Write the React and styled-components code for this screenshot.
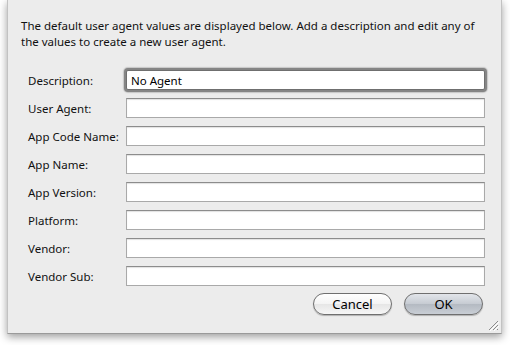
import React from "react";
import styled, { createGlobalStyle } from "styled-components";

const fields = [
	{ label: "Description:", value: "No Agent", focused: true },
	{ label: "User Agent:", value: "" },
	{ label: "App Code Name:", value: "" },
	{ label: "App Name:", value: "" },
	{ label: "App Version:", value: "" },
	{ label: "Platform:", value: "" },
	{ label: "Vendor:", value: "" },
	{ label: "Vendor Sub:", value: "" },
];

const GlobalStyle = createGlobalStyle`
	html, body {
		margin: 0;
		background: #ffffff;
	}
	body {
		font-family: "Noto Sans", "DejaVu Sans", sans-serif;
		color: #000;
	}
`;

const ResizeGrip = () => (
	<Grip width="12" height="12" viewBox="0 0 12 12">
		<path d="M11 2 L2 11 M11 6 L6 11 M11 10 L10 11" stroke="#8a8a8a" strokeWidth="1" fill="none" />
		<path d="M12 3 L3 12 M12 7 L7 12" stroke="#ffffff" strokeWidth="1" fill="none" />
	</Grip>
);

const App = () => {
	return (
		<>
			<GlobalStyle />
			<Stage>
				<Sheet>
					<Intro>
						The default user agent values are displayed below. Add a description and edit any of
						the values to create a new user agent.
					</Intro>
					<Form>
						{fields.map((f) => (
							<React.Fragment key={f.label}>
								<Label>{f.label}</Label>
								<Field $focused={f.focused} defaultValue={f.value} readOnly />
							</React.Fragment>
						))}
					</Form>
					<Buttons>
						<Button>Cancel</Button>
						<Button $primary>OK</Button>
					</Buttons>
					<ResizeGrip />
				</Sheet>
			</Stage>
		</>
	);
};

export default App;

const Stage = styled.div`
	width: 510px;
	height: 345px;
	overflow: hidden;
	padding-left: 7px;
	box-sizing: border-box;
`;

const Sheet = styled.div`
	position: relative;
	width: 495px;
	height: 334px;
	box-sizing: border-box;
	background: #ececec;
	border-left: 1px solid #c2c2c2;
	border-right: 1px solid #c2c2c2;
	border-bottom: 1px solid #9a9a9a;
	box-shadow: 0 3px 8px rgba(0, 0, 0, 0.38);
	padding: 18px 16px 0 13px;
	display: flex;
	flex-direction: column;
`;

const Intro = styled.p`
	margin: 0;
	font-size: 11.5px;
	line-height: 16px;
	width: 470px;
	color: #111;
`;

const Form = styled.div`
	display: grid;
	grid-template-columns: 98px 1fr;
	grid-auto-rows: 20px;
	row-gap: 8px;
	margin-top: 20px;
	padding-left: 7px;
	align-items: center;
`;

const Label = styled.label`
	font-size: 11.5px;
	white-space: nowrap;
	color: #111;
`;

const Field = styled.input`
	height: 20px;
	box-sizing: border-box;
	margin: 0;
	padding: 0 4px;
	font-family: "Noto Sans", "DejaVu Sans", sans-serif;
	font-size: 11.5px;
	color: #000;
	background: #fff;
	border: 1px solid #a9a9a9;
	border-top-color: #8c8c8c;
	box-shadow: inset 0 1px 1px rgba(0, 0, 0, 0.12);
	outline: none;
	${(p) =>
		p.$focused &&
		`
		border-radius: 2px;
		border-color: #6f6f6f;
		box-shadow: 0 0 0 2px rgba(125, 125, 125, 0.9), 0 0 1px 3px rgba(150, 150, 150, 0.45);
	`}
`;

const Buttons = styled.div`
	display: flex;
	justify-content: flex-end;
	gap: 12px;
	margin-top: 7px;
	padding-right: 2px;
`;

const Button = styled.button`
	width: 79px;
	height: 22px;
	box-sizing: border-box;
	border-radius: 11px;
	border: 1px solid #6f6f6f;
	font-family: "Noto Sans", "DejaVu Sans", sans-serif;
	font-size: 13px;
	color: #000;
	padding: 0;
	background: ${(p) =>
		p.$primary
			? "linear-gradient(#e2e5ea 0%, #c7ccd3 48%, #b4bac2 52%, #c9ced5 100%)"
			: "linear-gradient(#ffffff 0%, #f4f4f4 48%, #e6e6e6 52%, #f6f6f6 100%)"};
	box-shadow: 0 1px 1px rgba(0, 0, 0, 0.25);
`;

const Grip = styled.svg`
	position: absolute;
	right: 2px;
	bottom: 2px;
`;
